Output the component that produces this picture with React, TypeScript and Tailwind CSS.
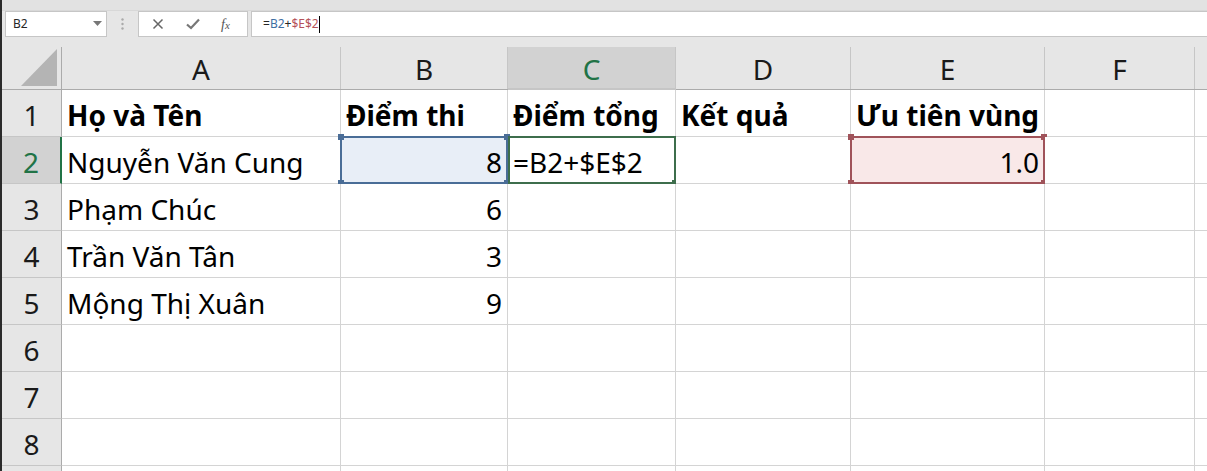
import React from "react";

const COLS = ["A", "B", "C", "D", "E", "F", ""];
const WIDTHS = ["w-[279px]", "w-[167px]", "w-[168px]", "w-[175px]", "w-[194px]", "w-[150px]", "flex-1"];

type Cell = { text?: string; bold?: boolean; right?: boolean };

const data: Cell[][] = [
  [{ text: "Họ và Tên", bold: true }, { text: "Điểm thi", bold: true }, { text: "Điểm tổng", bold: true }, { text: "Kết quả", bold: true }, { text: "Ưu tiên vùng", bold: true }, {}, {}],
  [{ text: "Nguyễn Văn Cung" }, { text: "8", right: true }, { text: "=B2+$E$2" }, {}, { text: "1.0", right: true }, {}, {}],
  [{ text: "Phạm Chúc" }, { text: "6", right: true }, {}, {}, {}, {}, {}],
  [{ text: "Trần Văn Tân" }, { text: "3", right: true }, {}, {}, {}, {}, {}],
  [{ text: "Mộng Thị Xuân" }, { text: "9", right: true }, {}, {}, {}, {}, {}],
  [{}, {}, {}, {}, {}, {}, {}],
  [{}, {}, {}, {}, {}, {}, {}],
  [{}, {}, {}, {}, {}, {}, {}],
  [{}, {}, {}, {}, {}, {}, {}],
];

function Handle({ pos, color }: { pos: string; color: string }) {
  return <span className={`absolute w-[6px] h-[6px] ${pos} ${color}`} />;
}

function Selection({ kind }: { kind: "blue" | "green" | "red" }) {
  if (kind === "blue") {
    return (
      <div className="absolute left-[-1px] top-[-1px] right-[-1px] bottom-[-1px] border-2 border-[#4a6d97] pointer-events-none">
        <Handle pos="left-[-4px] top-[-4px]" color="bg-[#4a6d97]" />
        <Handle pos="right-[-4px] top-[-4px]" color="bg-[#4a6d97]" />
        <Handle pos="left-[-4px] bottom-[-4px]" color="bg-[#4a6d97]" />
        <Handle pos="right-[-4px] bottom-[-4px]" color="bg-[#4a6d97]" />
      </div>
    );
  }
  if (kind === "green") {
    return (
      <div className="absolute left-[0px] top-[-1px] right-[-1px] bottom-[-1px] border-2 border-[#3d6e4c] pointer-events-none">
        <Handle pos="right-[-4px] bottom-[-4px]" color="bg-[#3d6e4c]" />
      </div>
    );
  }
  return (
    <div className="absolute left-[-1px] top-[-1px] right-[-1px] bottom-[-1px] border-2 border-[#a0535a] pointer-events-none">
      <Handle pos="left-[-4px] top-[-4px]" color="bg-[#a0535a]" />
      <Handle pos="right-[-4px] top-[-4px]" color="bg-[#a0535a]" />
      <Handle pos="left-[-4px] bottom-[-4px]" color="bg-[#a0535a]" />
      <Handle pos="right-[-4px] bottom-[-4px]" color="bg-[#a0535a]" />
    </div>
  );
}

export default function App() {
  const font = { fontFamily: '"Noto Sans", "Open Sans", sans-serif' };
  return (
    <div className="w-[1207px] h-[471px] bg-[#e6e6e6] border-l-2 border-[#2b2b2b] overflow-hidden flex flex-col" style={font}>
      {/* formula bar */}
      <div className="h-[47px] shrink-0 flex flex-col">
        <div className="h-[11px] shrink-0 border-b border-[#d8d8d8] bg-[#e2e2e2]" />
        <div className="flex items-center h-[26px] shrink-0 pl-[3px]">
          <div className="w-[102px] h-[26px] bg-white border border-[#c6c6c6] flex items-center justify-between pl-[7px] pr-[4px] text-[12px] text-[#262626]">
            <span>B2</span>
            <svg width="9" height="6" viewBox="0 0 9 6"><path d="M0 0 L9 0 L4.5 5 Z" fill="#777" /></svg>
          </div>
          <div className="w-[31px] flex justify-center">
            <svg width="3" height="12" viewBox="0 0 3 12"><circle cx="1.5" cy="1.5" r="1.2" fill="#aaa" /><circle cx="1.5" cy="6" r="1.2" fill="#aaa" /><circle cx="1.5" cy="10.5" r="1.2" fill="#aaa" /></svg>
          </div>
          <div className="w-[110px] h-[26px] bg-white border border-[#c6c6c6] flex items-center pl-[13px]">
            <svg width="12" height="12" viewBox="0 0 12 12"><path d="M1.5 1.5 L10.5 10.5 M10.5 1.5 L1.5 10.5" stroke="#666" strokeWidth="1.5" /></svg>
            <svg className="ml-[22px]" width="14" height="12" viewBox="0 0 14 12"><path d="M1 6.5 L5 10 L13 1.5" stroke="#777" strokeWidth="2.2" fill="none" /></svg>
            <span className="ml-[21px] text-[14px] italic text-[#555]" style={{ fontFamily: '"Liberation Serif", serif' }}>f<span className="text-[11px]">x</span></span>
          </div>
          <div className="flex-1 h-[26px] ml-[3px] bg-white border border-[#c6c6c6] border-r-0 flex items-center pl-[11px] text-[12px]">
            <span className="text-[#262626]">=</span>
            <span className="text-[#3e6ea3]">B2</span>
            <span className="text-[#262626]">+</span>
            <span className="text-[#b5525a]">$E$2</span>
            <span className="w-[1px] h-[17px] bg-black" />
          </div>
        </div>
        <div className="flex-1" />
      </div>

      {/* column header */}
      <div className="flex h-[43px] shrink-0 border-b border-[#ababab]">
        <div className="w-[60px] border-r border-[#ababab] flex items-end justify-end pr-[4px] pb-[3px]">
          <svg width="36" height="37" viewBox="0 0 36 37"><path d="M36 0 L36 37 L0 37 Z" fill="#b4b4b4" /></svg>
        </div>
        {COLS.map((c, i) => (
          <div
            key={i}
            className={`${WIDTHS[i]} flex items-center justify-center text-[28px] leading-none ${
              c === "C" ? "bg-[#d2d2d2] text-[#217346] border-b-2 border-[#217346] mb-[-1px]" : "text-[#1a1a1a]"
            } ${i < 6 ? "border-r border-[#c6c6c6]" : ""}`}
          >
            <span className="mt-[2px]">{c}</span>
          </div>
        ))}
      </div>

      {/* rows */}
      {data.map((row, r) => (
        <div key={r} className="flex h-[47px] shrink-0">
          <div
            className={`w-[60px] flex items-center justify-center text-[28px] leading-none border-b border-[#c6c6c6] ${
              r === 1 ? "bg-[#d2d2d2] text-[#217346] border-r-2 border-r-[#217346]" : "bg-[#e6e6e6] text-[#1a1a1a] border-r border-r-[#ababab]"
            }`}
          >
            <span className="mt-[3px]">{r < 8 ? r + 1 : ""}</span>
          </div>
          {row.map((cell, c) => {
            const isB2 = r === 1 && c === 1;
            const isC2 = r === 1 && c === 2;
            const isE2 = r === 1 && c === 4;
            const bg = isB2 ? "bg-[#e8eef7]" : isE2 ? "bg-[#f9e8e8]" : "bg-white";
            return (
              <div
                key={c}
                className={`${WIDTHS[c]} relative ${bg} border-b border-[#d4d4d4] ${c < 6 ? "border-r" : ""} flex items-center ${
                  cell.right ? "justify-end pr-[5px]" : "justify-start pl-[5px]"
                } text-[28px] leading-none text-black whitespace-nowrap ${cell.bold ? "font-bold" : ""}`}
              >
                <span className="mt-[3px] relative z-10">{cell.text}</span>
                {isB2 && <Selection kind="blue" />}
                {isC2 && <Selection kind="green" />}
                {isE2 && <Selection kind="red" />}
              </div>
            );
          })}
        </div>
      ))}
    </div>
  );
}
